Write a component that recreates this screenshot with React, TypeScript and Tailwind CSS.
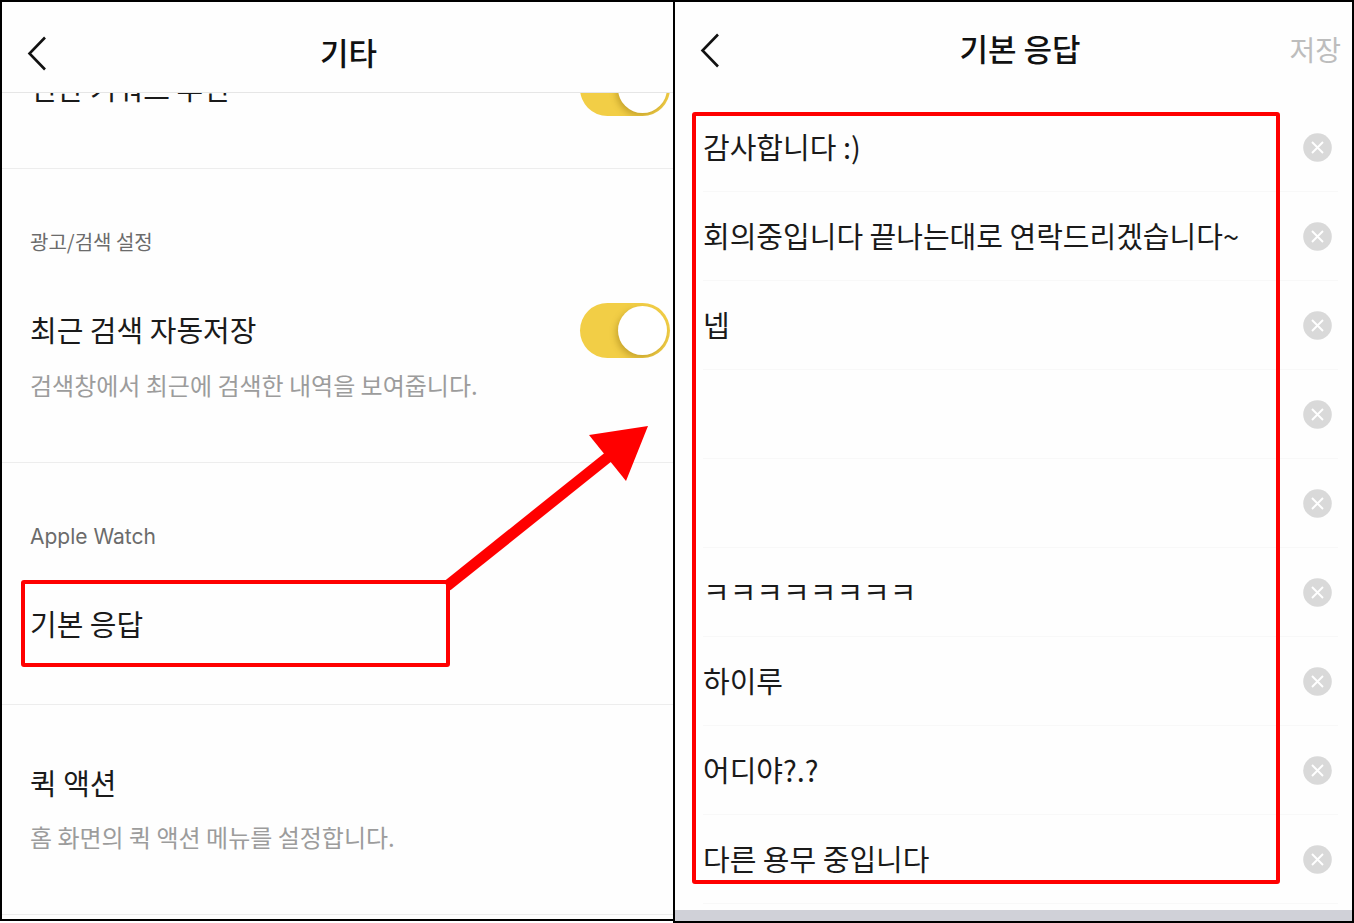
import { useState } from "react";
import type { ReactNode } from "react";

function BackButton() {
  return (
    <button type="button" aria-label="뒤로" className="justify-self-start">
      <svg width="24" height="36" viewBox="0 0 24 36" fill="none" stroke="#111" strokeWidth="2.6">
        <path d="M19 2.5 3.5 18.5 19 34.5" />
      </svg>
    </button>
  );
}

function Toggle({ id, checked, onChange }: { id: string; checked: boolean; onChange: (v: boolean) => void }) {
  return (
    <input
      id={id}
      type="checkbox"
      role="switch"
      checked={checked}
      onChange={(e) => onChange(e.target.checked)}
      className="flex h-[55px] w-[90px] shrink-0 cursor-pointer appearance-none items-center overflow-hidden rounded-full bg-gray-200 p-[3px] before:h-[49px] before:w-[49px] before:rounded-full before:bg-white before:shadow-[-2px_3px_6px_rgba(120,90,0,0.35)] checked:justify-end checked:bg-[#f2ce46]"
    />
  );
}

function ToggleRow({ id, label }: { id: string; label: string }) {
  const [on, setOn] = useState(true);
  return (
    <div className="flex items-center justify-between pr-[3px]">
      <label htmlFor={id} className="pb-[3px] text-[29px] leading-[52px] text-[#1a1a1a]">
        {label}
      </label>
      <Toggle id={id} checked={on} onChange={setOn} />
    </div>
  );
}

function Section({ className, children }: { className: string; children: ReactNode }) {
  return <section className={`border-b border-[#ededed] pl-7 ${className}`}>{children}</section>;
}

function SettingsPanel() {
  return (
    <main className="flex flex-col self-start border-y-2 border-l-2 border-black bg-[#fefefe]">
      <header className="grid h-[91px] grid-cols-[1fr_auto_1fr] items-center border-b border-[#e6e6e6] pt-3 pr-[2px] pl-6">
        <BackButton />
        <h1 className="pb-[3px] text-[31px] leading-10 font-medium text-[#111]">기타</h1>
      </header>
      <div className="overflow-hidden">
        <Section className="-mt-8 pb-[52px]">
          <ToggleRow id="keyword" label="연관 키워드 추천" />
        </Section>
      </div>
      <Section className="pt-[59px] pb-[61px]">
        <h2 className="mb-[47px] text-[20px] leading-7 text-[#6b6b6b]">광고/검색 설정</h2>
        <ToggleRow id="recent" label="최근 검색 자동저장" />
        <p className="mt-[11px] text-[24px] leading-8 text-[#9c9c9c]">검색창에서 최근에 검색한 내역을 보여줍니다.</p>
      </Section>
      <Section className="pt-[60px] pb-[37px]">
        <h2 className="font-['Inter','Noto_Sans_CJK_KR',sans-serif] text-[21px] leading-7 text-[#6b6b6b]">Apple Watch</h2>
        <div className="relative mt-[29px] -ml-[9px] w-[429px]">
          <button
            type="button"
            className="block w-full rounded-[3px] border-4 border-[#ff0000] py-[14px] pl-[5px] text-left text-[29px] leading-[51px] text-[#1a1a1a]"
          >
            기본 응답
          </button>
          <svg
            className="pointer-events-none absolute -top-40 left-[419px] z-10"
            width="216"
            height="176"
            viewBox="440 420 216 176"
            aria-hidden="true"
          >
            <path d="M447 586 612 454" stroke="#ff0000" strokeWidth="11" />
            <path d="M589 435 648 426 626 481Z" fill="#ff0000" />
          </svg>
        </div>
      </Section>
      <Section className="mb-1 pt-[50px] pb-[61px]">
        <h2 className="text-[29px] leading-[55px] text-[#1a1a1a]">퀵 액션</h2>
        <p className="mt-[11px] text-[24px] leading-8 text-[#9c9c9c]">홈 화면의 퀵 액션 메뉴를 설정합니다.</p>
      </Section>
    </main>
  );
}

const initialReplies = [
  "감사합니다 :)",
  "회의중입니다 끝나는대로 연락드리겠습니다~",
  "넵",
  "",
  "",
  "ㅋㅋㅋㅋㅋㅋㅋㅋ",
  "하이루",
  "어디야?.?",
  "다른 용무 중입니다",
];

function RepliesPanel() {
  const [replies, setReplies] = useState(initialReplies);
  const update = (index: number, value: string) =>
    setReplies((prev) => prev.map((r, i) => (i === index ? value : r)));

  return (
    <aside className="flex flex-col border-2 border-black bg-[#fefefe]">
      <header className="grid h-[101px] grid-cols-[1fr_auto_1fr] items-center pr-[11px] pb-[5px] pl-6">
        <BackButton />
        <h1 className="pb-1 text-[31px] leading-10 font-medium text-[#111]">기본 응답</h1>
        <button type="button" className="justify-self-end pb-[3px] text-[28px] leading-10 text-[#bdbdbd]">
          저장
        </button>
      </header>
      <div className="relative">
        <ul className="pr-[14px] pl-7">
          {replies.map((reply, i) => (
            <li key={i} className="flex h-[89px] items-center gap-6 border-b border-[#f8f8f8] pr-[6px]">
              <input
                type="text"
                aria-label={`응답 ${i + 1}`}
                value={reply}
                onChange={(e) => update(i, e.target.value)}
                className="h-14 min-w-0 flex-1 bg-transparent pb-[2px] text-[29px] text-[#1a1a1a] outline-none"
              />
              <button type="button" aria-label={`응답 ${i + 1} 지우기`} onClick={() => update(i, "")}>
                <svg width="29" height="29" viewBox="0 0 29 29" fill="none">
                  <circle cx="14.5" cy="14.5" r="14.3" fill="#d9d9d9" />
                  <path d="m9 9 11 11M20 9 9 20" stroke="#fff" strokeWidth="1.9" />
                </svg>
              </button>
            </li>
          ))}
        </ul>
        <div className="pointer-events-none absolute top-[9px] right-[72px] bottom-5 left-[17px] rounded-[3px] border-4 border-[#ff0000]" />
      </div>
      <div className="mt-[6px] h-[11px] bg-[#d0d1d8]" />
    </aside>
  );
}

export default function App() {
  return (
    <div className="grid grid-cols-[673fr_681fr] bg-white font-['Noto_Sans_CJK_KR',sans-serif]">
      <SettingsPanel />
      <RepliesPanel />
    </div>
  );
}
